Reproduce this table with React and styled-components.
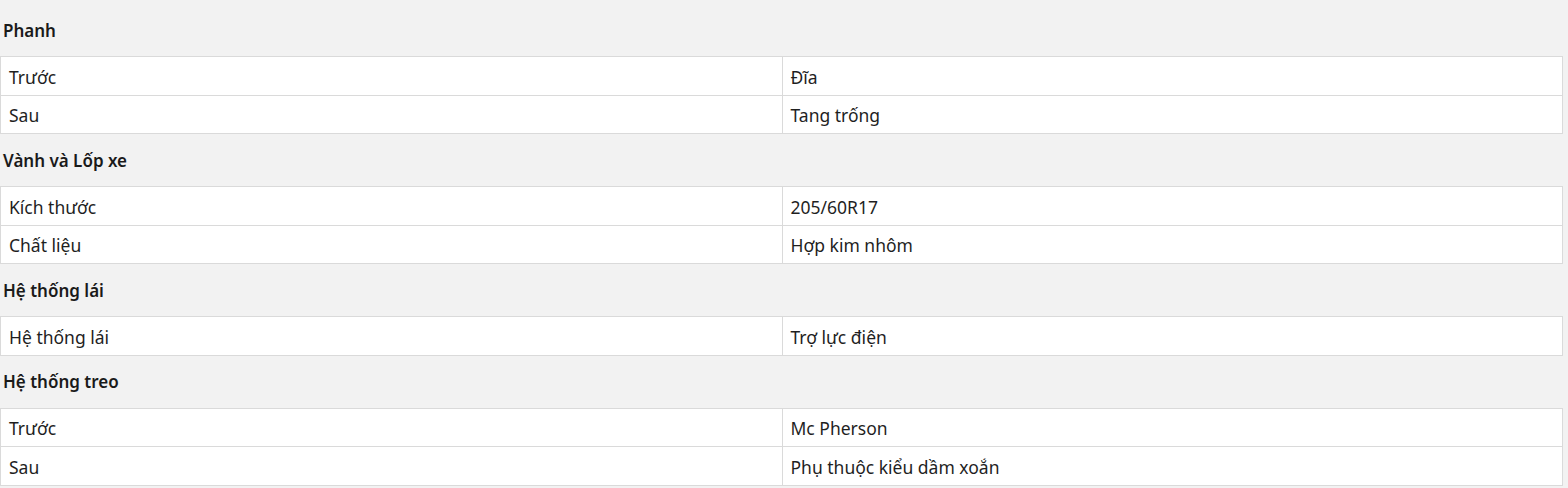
import React from "react";
import styled, { createGlobalStyle } from "styled-components";

const Global = createGlobalStyle`
  html, body { margin: 0; padding: 0; background: #f2f2f2; }
  body { font-family: "Noto Sans", "Open Sans", sans-serif; color: #1f1f1f; }
`;

const Page = styled.div`
  width: 1563px;
  padding-top: 4px;
`;

const Heading = styled.div`
  height: 52px;
  display: flex;
  align-items: center;
  padding-left: 3px;
  font-size: 17px;
  font-weight: 600;
  color: #1a1a1a;
`;

const Table = styled.div`
  background: #fff;
  border: 1px solid #dadada;
`;

const Row = styled.div`
  display: grid;
  grid-template-columns: 1fr 1fr;
  & + & { border-top: 1px solid #dadada; }
`;

const Cell = styled.div`
  padding: 7.5px 8px 4.5px;
  font-size: 17.5px;
  line-height: 25.5px;
  color: #1f1f1f;
  & + & { border-left: 1px solid #dadada; }
`;

const data = [
  { title: "Phanh", rows: [["Trước", "Đĩa"], ["Sau", "Tang trống"]] },
  { title: "Vành và Lốp xe", rows: [["Kích thước", "205/60R17"], ["Chất liệu", "Hợp kim nhôm"]] },
  { title: "Hệ thống lái", rows: [["Hệ thống lái", "Trợ lực điện"]] },
  { title: "Hệ thống treo", rows: [["Trước", "Mc Pherson"], ["Sau", "Phụ thuộc kiểu dầm xoắn"]] },
];

export default function App() {
  return (
    <>
      <Global />
      <Page>
        {data.map((s) => (
          <section key={s.title}>
            <Heading>{s.title}</Heading>
            <Table>
              {s.rows.map((r, i) => (
                <Row key={i}>
                  <Cell>{r[0]}</Cell>
                  <Cell>{r[1]}</Cell>
                </Row>
              ))}
            </Table>
          </section>
        ))}
      </Page>
    </>
  );
}
